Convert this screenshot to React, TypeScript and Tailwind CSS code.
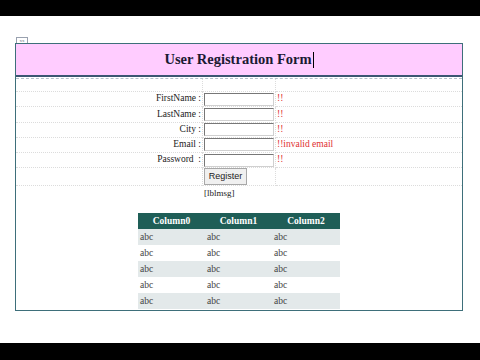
import React from 'react';

const fields = [
  { label: 'FirstName :', msg: '!!' },
  { label: 'LastName :', msg: '!!' },
  { label: 'City :', msg: '!!' },
  { label: 'Email :', msg: '!!invalid email' },
  { label: 'Password\u00a0 :', msg: '!!' },
];

const serif = { fontFamily: '"Liberation Serif", "Times New Roman", serif' };

export default function App() {
  return (
    <div className="w-[480px] h-[360px] bg-black flex flex-col overflow-hidden" style={serif}>
      <div className="h-[16px]" />
      <div className="h-[327px] bg-white px-[15px] pt-[21px]">
        {/* tiny page label */}
        <div className="h-[6px] flex pl-px">
          <div className="w-[12px] h-[6px] border-t border-l border-r border-gray-400 text-[5px] leading-[5px] text-gray-500 text-center">xx</div>
        </div>

        {/* Main box */}
        <div className="w-[448px] h-[268px] border border-[#3e6f7a] flex flex-col">
          {/* Header */}
          <div className="h-[33px] bg-[#ffccff] border-b-2 border-[#3c5572] flex items-center justify-center">
            <h1 className="text-[14.5px] font-bold text-[#1a1a33] leading-none flex items-center">
              User Registration Form
              <span className="inline-block w-px h-[16px] bg-black ml-px" />
            </h1>
          </div>
          <div className="h-[2px] border-b border-dashed border-[#b4c0ca]" />

          {/* Form grid */}
          <div className="grid grid-cols-[186px_74px_1fr] text-[9.5px] text-[#222]">
            <div className="h-[13px] border-b border-dotted border-[#dcdcdc]" />
            <div className="h-[13px] border-b border-l border-r border-dotted border-[#dcdcdc]" />
            <div className="h-[13px] border-b border-dotted border-[#dcdcdc]" />

            {fields.map((f) => (
              <React.Fragment key={f.label}>
                <div className="h-[15.25px] flex items-center justify-end pr-px border-b border-dotted border-[#dcdcdc] leading-none">
                  {f.label}
                </div>
                <div className="h-[15.25px] flex items-center px-[1px] border-b border-l border-r border-dotted border-[#dcdcdc]">
                  <div className="w-[70px] h-[13px] bg-white border border-t-[#777] border-l-[#777] border-r-[#d0d0d0] border-b-[#d0d0d0]" />
                </div>
                <div className="h-[15.25px] flex items-center pl-[1px] border-b border-dotted border-[#dcdcdc] text-[#e03030] leading-none">
                  {f.msg}
                </div>
              </React.Fragment>
            ))}

            <div className="h-[18px] border-b border-dotted border-[#dcdcdc]" />
            <div className="h-[18px] flex items-center px-[1px] border-b border-l border-r border-dotted border-[#dcdcdc]">
              <button
                className="w-[43px] h-[17px] bg-[#f0f0f0] border border-[#a8a8a8] text-[9px] text-[#222] leading-none"
                style={{ fontFamily: '"Liberation Sans", Arial, sans-serif' }}
              >
                Register
              </button>
            </div>
            <div className="h-[18px] border-b border-dotted border-[#dcdcdc]" />

            <div className="h-[12px]" />
            <div className="h-[12px] flex items-end pl-[2px] text-[9px] leading-none">[lblmsg]</div>
            <div className="h-[12px]" />
          </div>

          {/* Grid table */}
          <div className="flex justify-center mt-[15px]">
            <table className="w-[202px] border-collapse text-[9.5px]">
              <thead>
                <tr className="bg-[#1f5e57] text-white h-[16px]">
                  <th className="w-[67px] font-bold leading-none">Column0</th>
                  <th className="w-[67px] font-bold leading-none">Column1</th>
                  <th className="w-[68px] font-bold leading-none">Column2</th>
                </tr>
              </thead>
              <tbody className="text-[#444]">
                {[0, 1, 2, 3, 4].map((i) => (
                  <tr key={i} className={`h-[16px] ${i % 2 === 0 ? 'bg-[#e3e9ea]' : 'bg-white'}`}>
                    <td className="pl-[2px] leading-none">abc</td>
                    <td className="pl-[2px] leading-none">abc</td>
                    <td className="pl-[2px] leading-none">abc</td>
                  </tr>
                ))}
              </tbody>
            </table>
          </div>
        </div>
      </div>
    </div>
  );
}
